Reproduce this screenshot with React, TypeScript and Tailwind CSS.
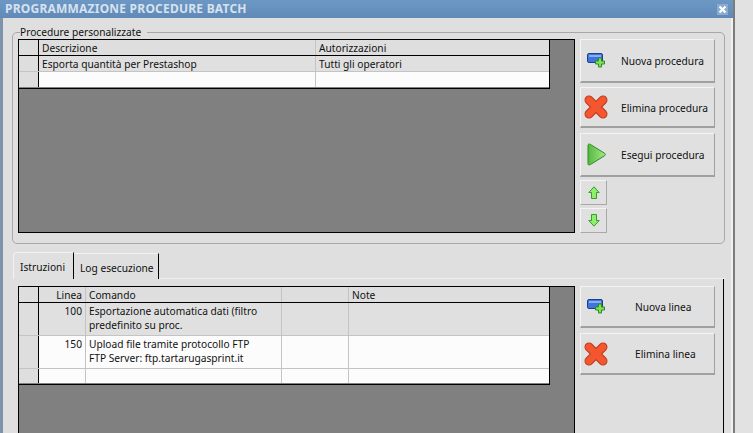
import type { ReactNode } from 'react'

const font = 'font-["Noto_Sans",Arial,sans-serif]'

function IconNew() {
  return (
    <svg width="20" height="15" viewBox="0 0 20 15">
      <rect x="1.500" y="0.500" width="15" height="9" rx="1.500" fill="#3f74d8" stroke="#1c3f96" />
      <rect x="3" y="2" width="12" height="2" fill="#86aef0" />
      <path d="M9.500 6.500h3v-3h3v3h3v3h-3v3h-3v-3h-3z" transform="translate(0 1.500)" fill="#7fe05a" stroke="#2f8a22" />
    </svg>
  )
}

function IconDelete() {
  return (
    <svg width="24" height="24" viewBox="0 0 24 24">
      <path d="M5 5l14 14M19 5l-14 14" stroke="#bb361a" strokeWidth="9" strokeLinecap="round" />
      <path d="M5 5l14 14M19 5l-14 14" stroke="#f4562f" strokeWidth="7" strokeLinecap="round" />
    </svg>
  )
}

function IconPlay() {
  return (
    <svg width="19" height="23" viewBox="0 0 19 23">
      <defs>
        <linearGradient id="playFill" x1="0" y1="0" x2="1" y2="0">
          <stop offset="0" stopColor="#54b83c" />
          <stop offset="1" stopColor="#a4e88a" />
        </linearGradient>
      </defs>
      <path d="M1 2.500c0-1.500 1-2 2.500-1l14 8.700c1 .7 1 1.900 0 2.600l-14 8.700c-1.500 1-2.500.5-2.500-1z" fill="url(#playFill)" stroke="#2f8a22" />
    </svg>
  )
}

function IconArrow({ down }: { down?: boolean }) {
  return (
    <svg width="12" height="13" viewBox="0 0 12 13" className={down ? 'rotate-180' : ''}>
      <path d="M6 .8l5.200 5.700h-2.700v6h-5v-6h-2.700z" fill="#8ef06a" stroke="#3a9a2c" />
    </svg>
  )
}

function ActionButton({ icon, label, h, text }: { icon: ReactNode; label: string; h: string; text: string }) {
  return (
    <button className={`${h} w-[135px] flex items-center bg-[#e0e0e0] border border-[#f4f4f4] border-r-[#a0a0a0] border-b-2 border-b-[#a0a0a0] text-[#111]`}>
      <span className="w-[26px] ml-[2px] flex justify-center shrink-0">{icon}</span>
      <span className={`${text} pt-[3px] whitespace-nowrap`}>{label}</span>
    </button>
  )
}

function SmallButton({ down }: { down?: boolean }) {
  return (
    <button className="w-[27px] h-[25px] flex items-center justify-center bg-[#e0e0e0] border border-[#f4f4f4] border-r-[#a8a8a8] border-b-[#a8a8a8]">
      <IconArrow down={down} />
    </button>
  )
}

function Row({ cols, cells, h, bg, border = 'border-black' }: { cols: string; cells: ReactNode[]; h: string; bg: string; border?: string }) {
  return (
    <div className={`grid ${cols} ${h} border-b ${border}`}>
      {cells.map((c, i) => (
        <div
          key={i}
          className={`${i === 0 ? 'bg-[#dedede] border-r border-black' : bg + ' border-r border-[#c4c4c4] last:border-r-0'} px-[3px] pt-px leading-[14px] whitespace-pre-line overflow-hidden`}
        >
          {c}
        </div>
      ))}
    </div>
  )
}

export default function App() {
  const topCols = 'grid-cols-[20px_277px_1fr]'
  const botCols = 'grid-cols-[20px_47px_196px_67px_1fr]'

  return (
    <div className={`${font} w-[753px] h-[433px] overflow-hidden flex bg-[#e2e2e2] text-[10.200px] text-[#111]`}>
      <div className="w-[735px] shrink-0 flex flex-col border-r-2 border-r-[#7c7c7c]">
        {/* title bar */}
        <div className="h-[18px] shrink-0 bg-gradient-to-b from-[#6e98c4] to-[#6089b8] flex items-center justify-between pl-[5px] pr-[5px]">
          <span className="font-bold text-[12px] text-[#d6e2ee] tracking-[0.22px]">PROGRAMMAZIONE PROCEDURE BATCH</span>
          <span className="w-[11px] h-[11px] bg-[#8aaccf] flex items-center justify-center">
            <svg width="9" height="9" viewBox="0 0 9 9">
              <path d="M1.500 1.500l6 6M7.500 1.500l-6 6" stroke="#fff" strokeWidth="2.200" />
            </svg>
          </span>
        </div>

        <div className="flex-1 min-h-0 bg-[#dfdfdf] border-l-[3px] border-l-[#7d93aa] border-r-2 border-r-[#f0f0f0] pl-[9px] pr-[6px]">
          {/* Procedure personalizzate */}
          <fieldset className="mt-[8px] h-[218px] border border-[#a8a8a8] rounded-[5px] pl-[5px] pr-[8px]">
            <legend className="ml-[2px] pr-[6px] leading-[13px] h-[13px]">Procedure personalizzate</legend>
            <div className="flex gap-[5px]">
              <div className="w-[557px] h-[194px] bg-[#808080] border border-black">
                <div className="w-[531px] border-r border-b border-black">
                  <Row cols={topCols} h="h-[16px]" bg="bg-[#dedede]" cells={['', 'Descrizione', 'Autorizzazioni']} />
                  <Row cols={topCols} h="h-[16px]" bg="bg-[#e0e0e0]" border="border-[#c4c4c4]" cells={['', 'Esporta quantità per Prestashop', 'Tutti gli operatori']} />
                  <Row cols={topCols} h="h-[16px]" bg="bg-[#fcfcfc]" border="border-transparent" cells={['', '', '']} />
                </div>
              </div>
              <div className="flex flex-col">
                <ActionButton h="h-[44px]" text="ml-[12px]" icon={<IconNew />} label="Nuova procedura" />
                <div className="h-[4px]" />
                <ActionButton h="h-[41px]" text="ml-[12px]" icon={<IconDelete />} label="Elimina procedura" />
                <div className="h-[5px]" />
                <ActionButton h="h-[44px]" text="ml-[12px]" icon={<IconPlay />} label="Esegui procedura" />
                <div className="h-[3px]" />
                <SmallButton />
                <div className="h-[3px]" />
                <SmallButton down />
              </div>
            </div>
          </fieldset>

          {/* tabs */}
          <div className="mt-[8px] flex h-[27px] pl-px">
            <div className="w-[61px] h-[27px] pl-[6px] pt-[7px] bg-[#e0e0e0] border-t border-l border-[#f2f2f2] border-r border-r-black rounded-tl-[4px] whitespace-nowrap">Istruzioni</div>
            <div className="w-[85px] h-[26px] mt-px pl-[6px] pt-[7px] border-t border-[#f2f2f2] border-r border-r-black whitespace-nowrap">Log esecuzione</div>
            <div className="flex-1 border-b border-[#efefef]" />
          </div>

          <div className="flex gap-[5px] pl-[6px] pt-[7px] pr-[8px] border-r border-r-black h-[160px] w-[712px]">
            <div className="w-[557px] h-[160px] shrink-0 bg-[#808080] border border-black">
              <div className="w-[531px] border-r border-b border-black">
                <Row cols={botCols} h="h-[16px]" bg="bg-[#dedede]" cells={['', <div className="text-right">Linea</div>, 'Comando', '', 'Note']} />
                <Row
                  cols={botCols}
                  h="h-[33px]"
                  bg="bg-[#e0e0e0]"
                  border="border-[#c4c4c4]"
                  cells={['', <div className="text-right">100</div>, 'Esportazione automatica dati (filtro\npredefinito su proc.', '', '']}
                />
                <Row
                  cols={botCols}
                  h="h-[33px]"
                  bg="bg-[#fcfcfc]"
                  border="border-[#c4c4c4]"
                  cells={['', <div className="text-right">150</div>, 'Upload file tramite protocollo FTP\nFTP Server: ftp.tartarugasprint.it', '', '']}
                />
                <Row cols={botCols} h="h-[15px]" bg="bg-[#fcfcfc]" border="border-transparent" cells={['', '', '', '', '']} />
              </div>
            </div>
            <div className="flex flex-col gap-[5px]">
              <ActionButton h="h-[42px]" text="ml-[26px]" icon={<IconNew />} label="Nuova linea" />
              <ActionButton h="h-[42px]" text="ml-[26px]" icon={<IconDelete />} label="Elimina linea" />
            </div>
          </div>
        </div>
      </div>
      <div className="flex-1 bg-[#e2e2e2]" />
    </div>
  )
}
